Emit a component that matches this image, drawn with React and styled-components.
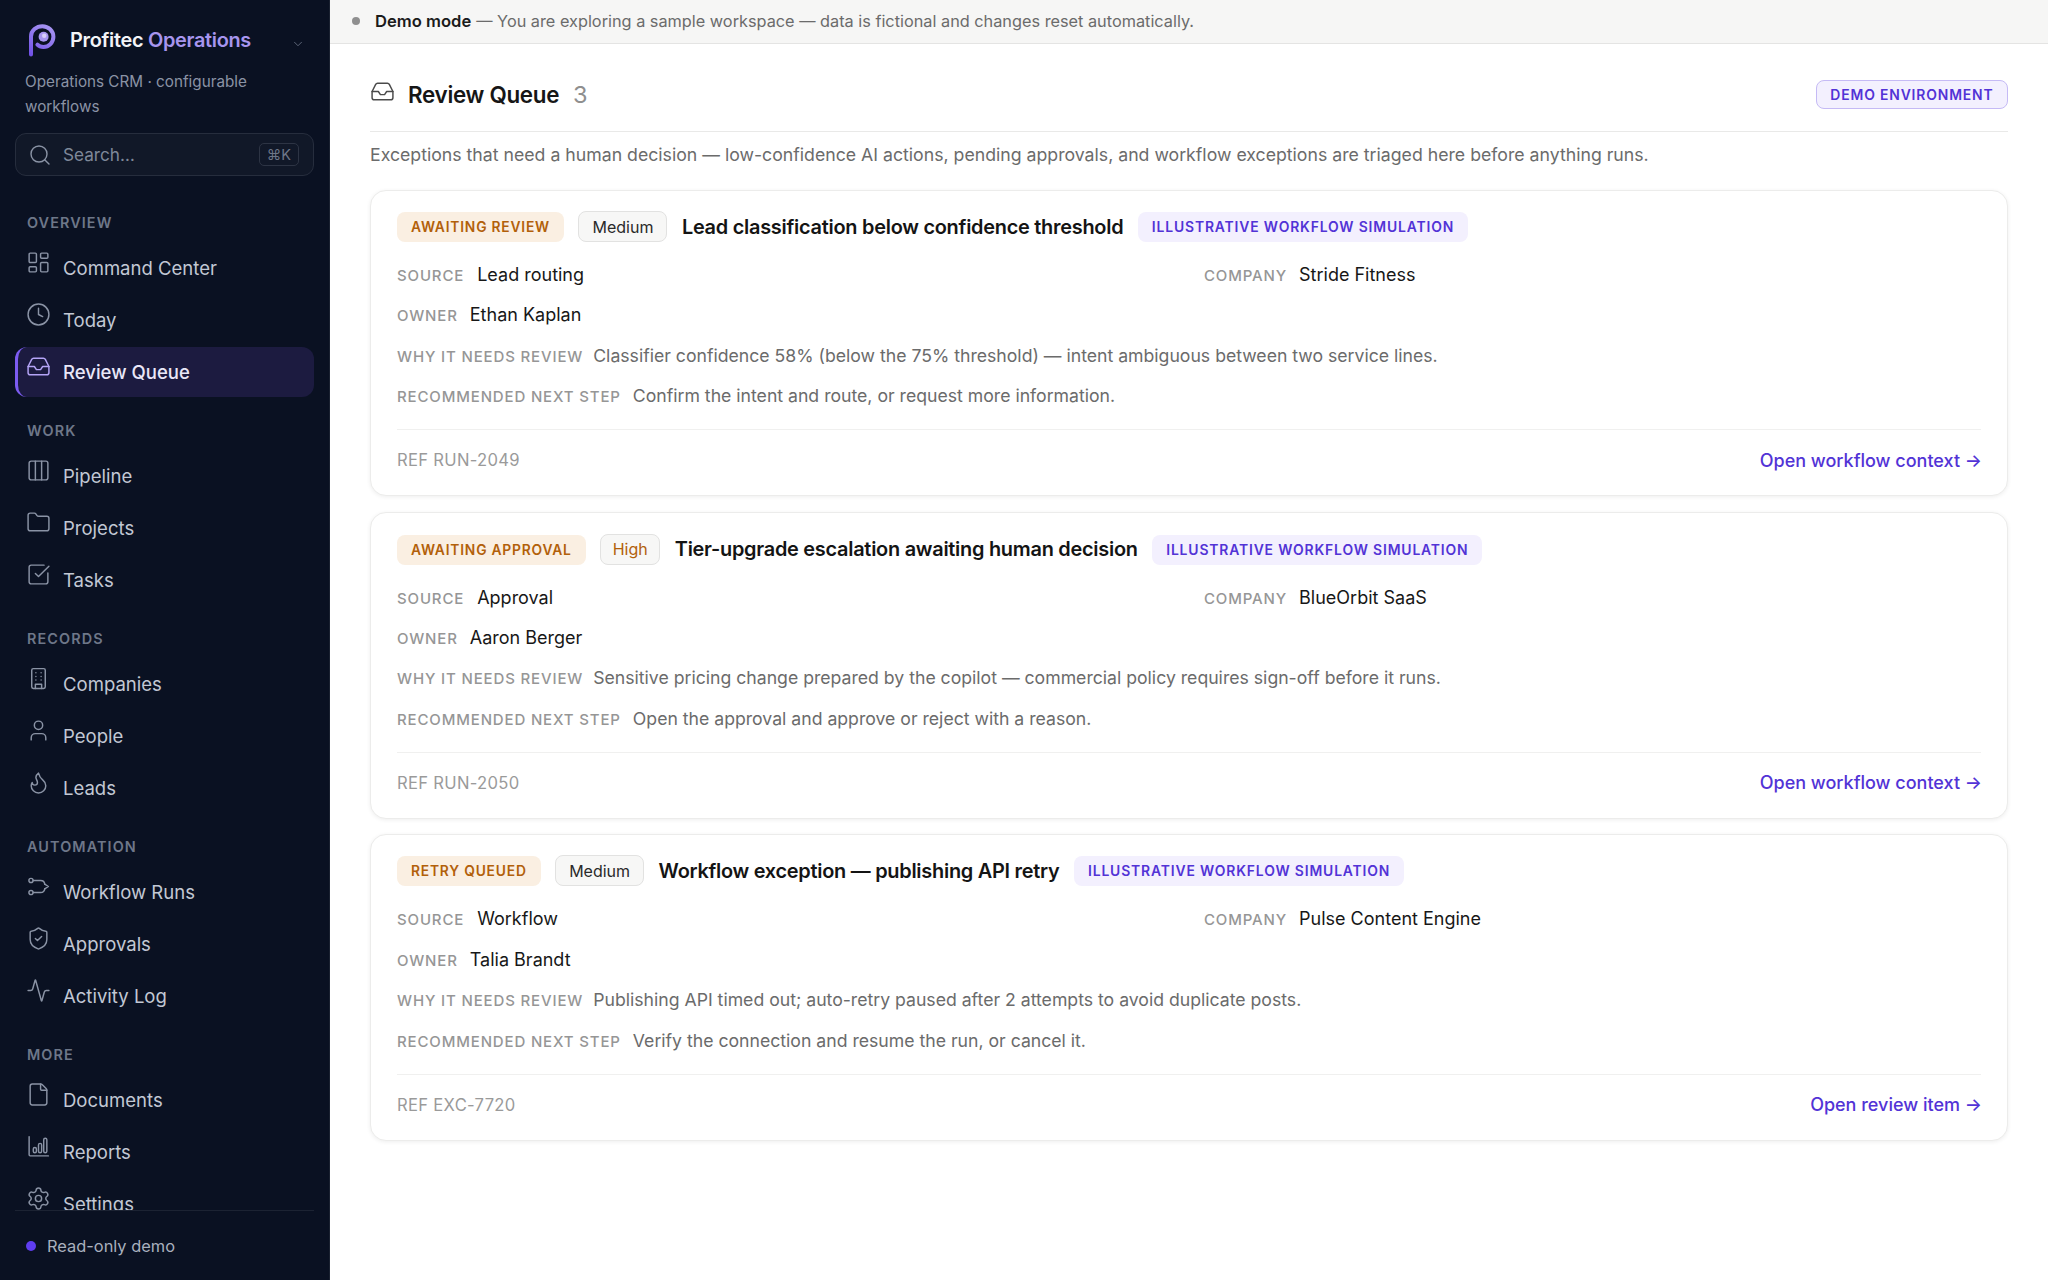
import React from 'react';
import styled, { createGlobalStyle } from 'styled-components';
import {
  LayoutDashboard, Clock, Inbox, Columns3, Folder, SquareCheckBig, User, Flame,
  ShieldCheck, Activity, File, Settings, Search, ChevronDown,
} from 'lucide-react';

const Global = createGlobalStyle`
  html, body { margin: 0; padding: 0; height: 100%; background: #fff; }
  body { font-family: Inter, "Liberation Sans", sans-serif; -webkit-font-smoothing: antialiased; }
  * { box-sizing: border-box; }
`;

const Shell = styled.div`display: flex; width: 2048px; height: 1280px; overflow: hidden;`;

const Sidebar = styled.aside`
  width: 330px; flex: none; height: 1280px; background: #0a1122; border-right: 1px solid #1a2130;
  padding: 0 15px; display: flex; flex-direction: column;
`;
const Brand = styled.div`
  display: flex; align-items: center; height: 32px; margin-top: 24px; padding: 0 9px 0 13px;
`;
const BrandName = styled.div`
  margin-left: 14px; font-size: 19.9px; font-weight: 600; color: #f3f4f7; letter-spacing: -0.3px; flex: 1; white-space: nowrap;
`;
const BrandAccent = styled.span`color: #a795ee;`;
const Chevron = styled(ChevronDown)`margin-top: 7px; color: #6e7789;`;
const Sub = styled.div`
  margin-top: 14px; padding-left: 10px; width: 260px; font-size: 15.25px; line-height: 24.5px; color: #8a93a5;
`;
const SearchBox = styled.div`
  margin-top: 14px; height: 43px; flex: none; border: 1px solid #262d3d; border-radius: 11px; background: #111828;
  display: flex; align-items: center; padding: 0 14px 0 12px; color: #8a93a5;
`;
const SearchText = styled.span`margin-left: 11px; flex: 1; font-size: 17.2px; color: #7f8899;`;
const Kbd = styled.span`
  border: 1px solid #2d3444; border-radius: 5px; font-size: 14.5px; padding: 2px 7px; color: #6d7688; line-height: 17px;
`;
const Nav = styled.nav`flex: 1; min-height: 0; overflow: hidden; padding-top: 36.7px;`;
const Group = styled.div`margin-bottom: 24px;`;
const GroupLabel = styled.div`
  height: 20px; line-height: 20px; padding-left: 12px; margin-bottom: 10px; font-size: 14.4px; font-weight: 600;
  letter-spacing: 1.1px; color: #6e7789;
`;
const Item = styled.div`
  display: flex; align-items: center; height: 50px; margin-bottom: 2px; padding: 0 0 0 8px; border-radius: 12px;
  font-size: 18.55px; color: ${p => (p.$active ? '#e9e7f8' : '#c2c8d4')}; font-weight: ${p => (p.$active ? 500 : 400)};
  background: ${p => (p.$active ? '#1c1b40' : 'transparent')};
  border-left: 3px solid ${p => (p.$active ? '#7c5cf0' : 'transparent')};
`;
const IconWrap = styled.span`
  width: 25px; height: 25px; flex: none; margin-right: 12px; margin-top: -10px;
  display: flex; align-items: center; justify-content: center; color: ${p => (p.$active ? '#b4a4f6' : '#8a93a5')};
`;
const Foot = styled.div`
  flex: none; height: 70px; border-top: 1px solid #1c2333; display: flex; align-items: center; padding-left: 11px;
  font-size: 16.4px; color: #a9b0be;
`;
const Dot = styled.span`
  width: 10px; height: 10px; border-radius: 50%; background: #5f3df0; margin-right: 11px;
`;

const Main = styled.main`flex: 1; min-width: 0; display: flex; flex-direction: column;`;
const Banner = styled.div`
  height: 44px; flex: none; background: #f6f6f5; border-bottom: 1.5px solid #e4e4e3; display: flex; align-items: center;
  padding: 0 0 2px 22px; font-size: 16.3px; color: #6b6b6b; white-space: nowrap;
`;
const BannerDot = styled.span`width: 8px; height: 8px; border-radius: 50%; background: #8f8f8f; margin-right: 15px;`;
const Strong = styled.strong`font-weight: 600; font-size: 16.6px; color: #1b1b1b; margin-right: 5px;`;
const Content = styled.div`padding: 0 40px 0 40px;`;
const Head = styled.div`
  display: flex; align-items: center; height: 88px; padding-top: 14px; border-bottom: 1.5px solid #e9e9e8;
`;
const HeadIcon = styled.span`color: #4a4a4a; display: flex; margin-top: -6px; margin-right: 13px;`;
const Title = styled.h1`margin: 0; font-size: 22.4px; font-weight: 600; color: #161616; letter-spacing: -0.3px;`;
const Count = styled.span`margin-left: 14px; font-size: 23.5px; color: #8f8f8f; flex: 1;`;
const DemoBadge = styled.span`
  height: 29px; padding: 0 13.5px; display: flex; align-items: center; background: #f3f0fe; border: 1.5px solid #c5baf5; border-radius: 8px;
  font-size: 13.9px; font-weight: 600; letter-spacing: 0.85px; color: #5233d6;
`;
const Intro = styled.p`
  margin: 0; height: 58px; line-height: 45px; font-size: 17.7px; color: #6b6b6b; white-space: nowrap;
`;
const Card = styled.article`
  border: 1.5px solid #ececeb; border-radius: 16px; background: #fff; box-shadow: 0 1px 4px rgba(0,0,0,.07);
  padding: 20px 26px 5px; margin-bottom: 15.5px;
`;
const TagRow = styled.div`
  display: flex; align-items: flex-end; gap: 14.5px; height: ${p => (p.$tall ? 32 : 31)}px; white-space: nowrap;
`;
const StatusTag = styled.span`
  height: 30px; display: flex; align-items: center; padding: 0 14px; border-radius: 8px; background: #faefe2;
  font-size: 13.8px; font-weight: 600; letter-spacing: 0.8px; color: #b2600a;
`;
const Priority = styled.span`
  height: 31px; display: flex; align-items: center; padding: 0 ${p => (p.$high ? 11.5 : 13)}px; border-radius: 8px; background: #f7f7f6; border: 1.5px solid #e2e2e1;
  font-size: 16px; color: ${p => (p.$high ? '#b2600a' : '#2a2a2a')};
`;
const CardTitle = styled.h2`margin: 0; align-self: center; font-size: 19.9px; font-weight: 600; color: #141414; letter-spacing: -0.25px;`;
const SimTag = styled.span`
  height: 30px; display: flex; align-items: center; padding: 0 14px; border-radius: 8px; background: #f3f0fe;
  font-size: 13.9px; font-weight: 600; letter-spacing: 0.85px; color: #5233d6;
`;
const Fields = styled.div`
  margin-top: 21px; display: grid; grid-template-columns: 1fr 1fr; column-gap: 30px; row-gap: 16.4px; padding-bottom: 21px;
  border-bottom: 1.5px solid #f0f0ef;
`;
const Field = styled.div`
  display: flex; align-items: baseline; height: 24px; line-height: 24px; grid-column: ${p => (p.$wide ? '1 / -1' : 'auto')}; white-space: nowrap;
`;
const Label = styled.span`
  font-size: 15px; font-weight: 500; letter-spacing: 0.85px; color: #969696; margin-right: ${p => p.$gap ?? 12}px;
`;
const Value = styled.span`font-size: ${p => (p.$muted ? 17.65 : 18)}px; color: ${p => (p.$muted ? '#6b6b6b' : '#171717')};`;
const Foot2 = styled.div`
  display: flex; justify-content: space-between; align-items: center; height: 60px;
`;
const Ref = styled.span`font-size: 16.6px; letter-spacing: 0.3px; color: #9a9a9a;`;
const Open = styled.a`font-size: 18px; font-weight: 500; color: #5233d6; text-decoration: none; margin-right: -1px;`;

const ic = { size: 25, strokeWidth: 1.4 };

const Svg = ({ children }) => (
  <svg width="25" height="25" viewBox="0 0 24 24" fill="none" stroke="currentColor" strokeWidth="1.4" strokeLinecap="round" strokeLinejoin="round">
    {children}
  </svg>
);

const RouteIcon = () => (
  <Svg>
    <circle cx="4.8" cy="6.2" r="2" />
    <circle cx="4.8" cy="17.8" r="2" />
    <path d="M7 6.2h7a4 4 0 0 1 4 3.6" />
    <path d="M7 17.8h7a4 4 0 0 0 4-3.6" />
    <path d="M18 9.8 21.5 12 18 14.2" />
  </Svg>
);

const BuildingIcon = () => (
  <Svg>
    <rect x="5.5" y="2.5" width="13" height="19" rx="1.5" />
    <path d="M9.5 6.5h.01M14.5 6.5h.01M9.5 10h.01M14.5 10h.01M9.5 13.5h.01M14.5 13.5h.01" />
    <path d="M9 21.5V17.5h6v4" />
  </Svg>
);

const ReportsIcon = () => (
  <Svg>
    <path d="M3 2.5V20a1 1 0 0 0 1 1h17.5" />
    <rect x="7" y="13" width="3" height="5" rx="1.5" />
    <rect x="12" y="9" width="3" height="9" rx="1.5" />
    <rect x="17" y="4" width="3" height="14" rx="1.5" />
  </Svg>
);

const Logo = () => (
  <svg width="28" height="33" viewBox="0 0 28 33" fill="none">
    <defs>
      <linearGradient id="lg" x1="0" y1="33" x2="20" y2="0" gradientUnits="userSpaceOnUse">
        <stop offset="0" stopColor="#6c4be6" />
        <stop offset="1" stopColor="#a896f2" />
      </linearGradient>
    </defs>
    <path d="M3 30.5V12.5C3 6.5 8.5 2.2 14.4 2.2c6 0 11 4.7 11 10.6 0 5.8-4.6 10.2-10 10.2-2.5 0-4.6-.9-6-2.4" stroke="url(#lg)" strokeWidth="4" strokeLinecap="round" />
    <circle cx="15.6" cy="12.8" r="5" fill="#a896f2" />
    <circle cx="16.2" cy="11.8" r="2.2" fill="#d8cffb" />
  </svg>
);

const groups = [
  ['OVERVIEW', [['Command Center', <LayoutDashboard {...ic} />], ['Today', <Clock {...ic} />], ['Review Queue', <Inbox {...ic} />, true]]],
  ['WORK', [['Pipeline', <Columns3 {...ic} />], ['Projects', <Folder {...ic} />], ['Tasks', <SquareCheckBig {...ic} />]]],
  ['RECORDS', [['Companies', <BuildingIcon />], ['People', <User {...ic} />], ['Leads', <Flame {...ic} />]]],
  ['AUTOMATION', [['Workflow Runs', <RouteIcon />], ['Approvals', <ShieldCheck {...ic} />], ['Activity Log', <Activity {...ic} />]]],
  ['MORE', [['Documents', <File {...ic} />], ['Reports', <ReportsIcon />], ['Settings', <Settings {...ic} />]]],
];

const cards = [
  {
    status: 'AWAITING REVIEW', pr: 'Medium', title: 'Lead classification below confidence threshold',
    source: 'Lead routing', company: 'Stride Fitness', owner: 'Ethan Kaplan',
    why: 'Classifier confidence 58% (below the 75% threshold) — intent ambiguous between two service lines.',
    next: 'Confirm the intent and route, or request more information.', ref: 'REF RUN-2049', link: 'Open workflow context →',
  },
  {
    status: 'AWAITING APPROVAL', pr: 'High', title: 'Tier-upgrade escalation awaiting human decision',
    source: 'Approval', company: 'BlueOrbit SaaS', owner: 'Aaron Berger',
    why: 'Sensitive pricing change prepared by the copilot — commercial policy requires sign-off before it runs.',
    next: 'Open the approval and approve or reject with a reason.', ref: 'REF RUN-2050', link: 'Open workflow context →',
  },
  {
    status: 'RETRY QUEUED', pr: 'Medium', title: 'Workflow exception — publishing API retry',
    source: 'Workflow', company: 'Pulse Content Engine', owner: 'Talia Brandt',
    why: 'Publishing API timed out; auto-retry paused after 2 attempts to avoid duplicate posts.',
    next: 'Verify the connection and resume the run, or cancel it.', ref: 'REF EXC-7720', link: 'Open review item →',
  },
];

export default function App() {
  return (
    <Shell>
      <Global />
      <Sidebar>
        <Brand>
          <Logo />
          <BrandName>Profitec <BrandAccent>Operations</BrandAccent></BrandName>
          <Chevron size={14} strokeWidth={1.4} />
        </Brand>
        <Sub>Operations CRM · configurable workflows</Sub>
        <SearchBox>
          <Search size={24} strokeWidth={1.4} />
          <SearchText>Search…</SearchText>
          <Kbd>⌘K</Kbd>
        </SearchBox>
        <Nav>
          {groups.map(([label, items]) => (
            <Group key={label}>
              <GroupLabel>{label}</GroupLabel>
              {items.map(([name, icon, active]) => (
                <Item key={name} $active={active}>
                  <IconWrap $active={active}>{icon}</IconWrap>
                  {name}
                </Item>
              ))}
            </Group>
          ))}
        </Nav>
        <Foot><Dot />Read-only demo</Foot>
      </Sidebar>
      <Main>
        <Banner>
          <BannerDot />
          <Strong>Demo mode</Strong> — You are exploring a sample workspace — data is fictional and changes reset automatically.
        </Banner>
        <Content>
          <Head>
            <HeadIcon><Inbox size={25} strokeWidth={1.4} /></HeadIcon>
            <Title>Review Queue</Title>
            <Count>3</Count>
            <DemoBadge>DEMO ENVIRONMENT</DemoBadge>
          </Head>
          <Intro>Exceptions that need a human decision — low-confidence AI actions, pending approvals, and workflow exceptions are triaged here before anything runs.</Intro>
          {cards.map(c => (
            <Card key={c.ref}>
              <TagRow $tall={c.pr === 'High'}>
                <StatusTag>{c.status}</StatusTag>
                <Priority $high={c.pr === 'High'}>{c.pr}</Priority>
                <CardTitle>{c.title}</CardTitle>
                <SimTag>ILLUSTRATIVE WORKFLOW SIMULATION</SimTag>
              </TagRow>
              <Fields>
                <Field><Label $gap={13}>SOURCE</Label><Value>{c.source}</Value></Field>
                <Field><Label>COMPANY</Label><Value>{c.company}</Value></Field>
                <Field $wide><Label>OWNER</Label><Value>{c.owner}</Value></Field>
                <Field $wide><Label $gap={10}>WHY IT NEEDS REVIEW</Label><Value $muted>{c.why}</Value></Field>
                <Field $wide><Label>RECOMMENDED NEXT STEP</Label><Value $muted>{c.next}</Value></Field>
              </Fields>
              <Foot2>
                <Ref>{c.ref}</Ref>
                <Open>{c.link}</Open>
              </Foot2>
            </Card>
          ))}
        </Content>
      </Main>
    </Shell>
  );
}
